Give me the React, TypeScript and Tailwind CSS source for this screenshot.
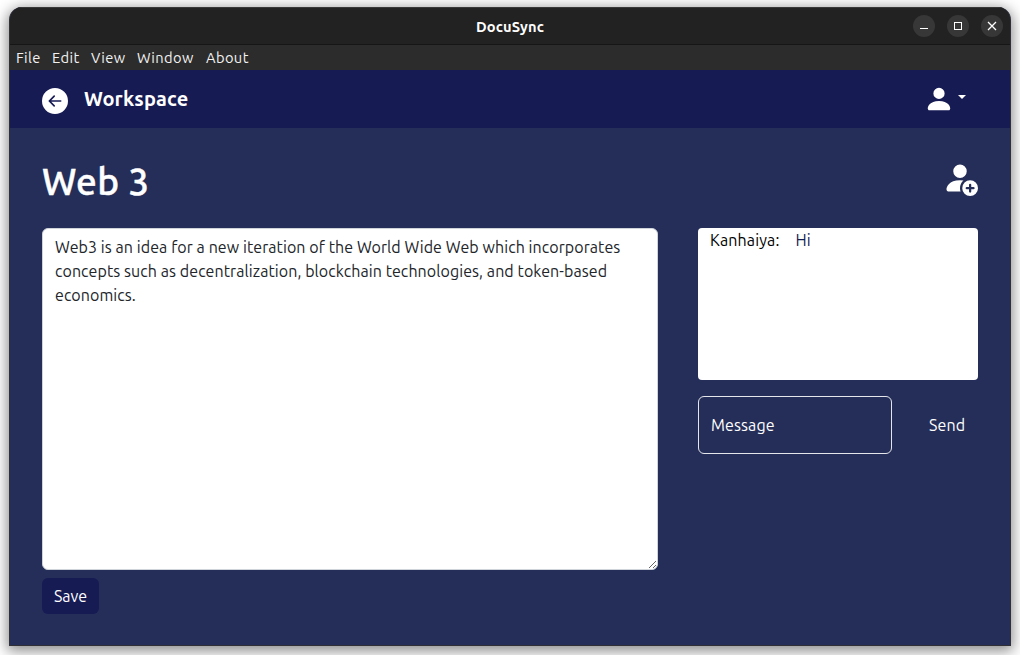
import { BsArrowLeftCircleFill, BsPersonFill, BsPersonFillAdd } from "react-icons/bs";

const menuItems = [
  { label: "File", style: "w-9" },
  { label: "Edit", style: "w-[39px]" },
  { label: "View", style: "w-[46px]" },
  { label: "Window", style: "w-[69px]" },
  { label: "About", style: "w-12" },
];

const initialText =
  "Web3 is an idea for a new iteration of the World Wide Web which incorporates\n" +
  "concepts such as decentralization, blockchain technologies, and token-based\n" +
  "economics.";

function TitleBar() {
  const button = "flex h-[22px] w-[22px] items-center justify-center rounded-full bg-[#373737]";
  return (
    <header className="grid h-[38px] shrink-0 grid-cols-[1fr_auto_1fr] items-center border-t border-b border-t-[#383838] border-b-[#161616] bg-[#222222] pr-[7px] pl-[7px]">
      <span />
      <h1 className="mt-px text-[14.67px] font-bold tracking-[0.16px] text-white">DocuSync</h1>
      <div className="flex justify-end gap-3">
        <button className={button} aria-label="Minimize">
          <svg width="22" height="22" shapeRendering="crispEdges"><path d="M7 13h8v1H7z" fill="#fff" /></svg>
        </button>
        <button className={button} aria-label="Maximize">
          <svg width="22" height="22" shapeRendering="crispEdges"><path d="M7.5 7.5h7v7h-7z" fill="none" stroke="#fff" /></svg>
        </button>
        <button className={button} aria-label="Close">
          <svg width="22" height="22"><path d="M7 7l8 8M15 7l-8 8" fill="none" stroke="#fff" strokeWidth="1.3" /></svg>
        </button>
      </div>
    </header>
  );
}

export default function App() {
  return (
    <div className="h-[655px] w-[1020px] overflow-hidden bg-white px-[9px] pt-[7px] font-['Ubuntu','Noto_Sans',sans-serif]">
      <div className="flex h-[639px] w-[1002px] flex-col overflow-hidden rounded-t-[13px] border-r border-b border-l border-[#303036] bg-[#252e58] shadow-[0_3px_14px_2px_rgba(0,0,0,0.45)]">
        <TitleBar />
        <nav className="flex h-[25px] shrink-0 items-center bg-[#2c2c2c] pl-1.5 text-[14.67px] tracking-[0.4px] text-[#f2f2f2]">
          {menuItems.map((item) => (
            <span key={item.label} className={item.style}>{item.label}</span>
          ))}
        </nav>
        <div className="flex h-[58px] shrink-0 items-center bg-[#171b54] pr-11 pl-8 text-white">
          <BsArrowLeftCircleFill size={26} className="mt-1" />
          <h2 className="ml-4 text-[20px] leading-[30px] font-bold tracking-[0.15px]">Workspace</h2>
          <button className="ml-auto flex items-center" aria-label="Account">
            <BsPersonFill size={30} />
            <span className="mb-1 ml-1 h-0 w-0 border-x-4 border-t-4 border-x-transparent border-t-white" />
          </button>
        </div>
        <main className="flex flex-1 flex-col px-8 text-[16px] text-white">
          <div className="flex h-[100px] items-center justify-between">
            <h3 className="mt-[7px] text-[37px] leading-[48px] font-medium tracking-[0.3px] [-webkit-text-stroke:0.45px_white]">Web 3</h3>
            <BsPersonFillAdd size={36} />
          </div>
          <div className="flex justify-between">
            <section className="w-[616px]">
              <textarea
                defaultValue={initialText}
                spellCheck={false}
                className="block h-[342px] w-full resize overflow-hidden rounded-md border border-[#ced4da] bg-white px-3 py-1.5 leading-6 tracking-[0.075px] whitespace-pre text-[#212529] outline-none"
              />
              <button className="mt-2 h-9 w-[57px] rounded-md bg-[#171b54]">Save</button>
            </section>
            <section className="w-[280px]">
              <div className="flex h-[152px] gap-4 rounded bg-white px-3 leading-6 text-black">
                <span className="tracking-[0.15px]">Kanhaiya:</span>
                <span className="tracking-[0.2px] text-[#171b54]">Hi</span>
              </div>
              <div className="mt-4 flex items-center">
                <input
                  placeholder="Message"
                  className="h-[58px] w-[194px] rounded-md border border-[#e4e6ec] bg-transparent px-3 tracking-[0.12px] outline-none placeholder:text-white"
                />
                <button className="ml-[37px] tracking-[0.1px]">Send</button>
              </div>
            </section>
          </div>
        </main>
      </div>
    </div>
  );
}
